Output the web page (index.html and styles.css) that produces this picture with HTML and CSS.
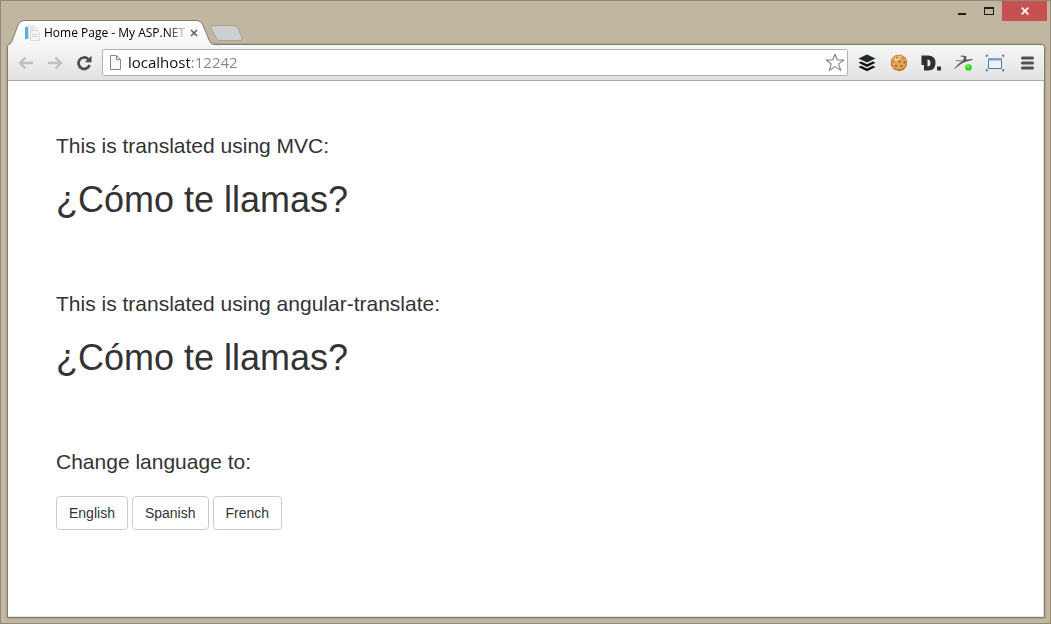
FILE: index.html
```html
<!DOCTYPE html>
<html lang="en">
<head>
<meta charset="utf-8">
<title>Home Page - My ASP.NET Application</title>
<link rel="stylesheet" href="styles.css">
</head>
<body>
<div class="window">
  <header class="titlebar">
    <div class="tab">
      <svg class="tab-shape" width="206" height="26" viewBox="0 0 206 26" aria-hidden="true">
        <defs><linearGradient id="tabfill" x1="0" y1="0" x2="0" y2="1"><stop offset="0" stop-color="#fff"/><stop offset="1" stop-color="#f6f6f6"/></linearGradient></defs>
        <path d="M0 26V25Q3 24 4 21L10 5Q12 .5 16 .5H189Q193 .5 195 5L201 20Q203 24.500 206 24.500V26Z" fill="url(#tabfill)"/>
        <path d="M0 25Q3 24 4 21L10 5Q12 .5 16 .5H189Q193 .5 195 5L201 20Q203 24.500 206 24.500" fill="none" stroke="#847a68"/>
      </svg>
      <svg class="favicon" width="16" height="16" viewBox="0 0 16 16" aria-hidden="true">
        <path d="M1 1.500H11V14.500H1Z" fill="#e6eef4"/>
        <path d="M1 2H4V14H1Z" fill="#62a9dc"/><path d="M4.500 .5H10.500L13 3V13H4.500Z" fill="#f1f3f5" stroke="#dde2e5"/>
        <path d="M6 3H10M6 5H9" stroke="#c5d2dc"/><path d="M6.500 5.500H12.500L15.500 8V15.500H6.500Z" fill="#f5f6f7" stroke="#d7dbdf"/>
        <path d="M8 9.500H13M8 11.500H14" stroke="#ccd4da"/>
      </svg>
      <span class="tab-title">Home Page - My ASP.NET</span>
      <button class="tab-close" aria-label="Close tab"><svg width="8" height="8" viewBox="0 0 8 8"><path d="M1 1L7 7M7 1L1 7" stroke="#5c5c5c" stroke-width="1.500"/></svg></button>
    </div>
    <button class="new-tab" aria-label="New tab"><svg width="33" height="17" viewBox="0 0 33 17"><path d="M3.500 .5H24Q27 .5 28 3L32 13Q33 15.500 30 15.500H10Q7 15.500 6 13L1 3Q0 .5 3.500 .5Z" fill="#cdd0d2" stroke="#aaa18e"/></svg></button>
    <div class="controls">
      <button class="control" aria-label="Minimize"><svg width="8" height="10" viewBox="0 0 8 10"><path d="M0 7H8V9H0Z" fill="#1c1c1c"/></svg></button>
      <button class="control" aria-label="Maximize"><svg width="10" height="8" viewBox="0 0 10 8"><path d="M0 0H10V8H0ZM1 2V7H9V2Z" fill="#1c1c1c" fill-rule="evenodd"/></svg></button>
      <button class="control control-close" aria-label="Close window"><svg width="8" height="8" viewBox="0 0 8 8"><path d="M.7 .7L7.300 7.300M7.300 .7L.7 7.300" stroke="#fff" stroke-width="1.700"/></svg></button>
    </div>
  </header>
  <div class="frame">
    <nav class="toolbar" aria-label="Browser">
      <button class="nav" aria-label="Back"><svg width="16" height="14" viewBox="0 0 16 14"><path d="M15 7H2M7.500 1.500L2 7L7.500 12.500" fill="none" stroke="#c0c0c0" stroke-width="2.400"/></svg></button>
      <button class="nav" aria-label="Forward"><svg width="16" height="14" viewBox="0 0 16 14"><path d="M1 7H14M8.500 1.500L14 7L8.500 12.500" fill="none" stroke="#c0c0c0" stroke-width="2.400"/></svg></button>
      <button class="nav" aria-label="Reload"><svg width="16" height="16" viewBox="0 0 16 16"><path d="M12.300 4.200A5.700 5.700 0 1 0 13.600 10" fill="none" stroke="#4c4c4c" stroke-width="2.700"/><path d="M15.500 .8V7.300H8.800Z" fill="#4c4c4c"/></svg></button>
      <div class="address">
        <svg width="13" height="16" viewBox="0 0 13 16" aria-hidden="true"><path d="M1.500 .5H7.500L11.500 4.500V14.500H1.500ZM7.500 .5V4.500H11.500" fill="#fafafa" stroke="#888"/></svg>
        <input class="url" type="text" aria-label="Address" value="localhost:12242" spellcheck="false">
        <button class="star" aria-label="Bookmark this page"><svg width="20" height="19" viewBox="0 0 20 19"><path d="M10 1.200L12.300 7H18.800L13.700 10.900L15.700 17.400L10 13.600L4.300 17.400L6.300 10.900L1.200 7H7.700Z" fill="#fff" stroke="#808080" stroke-width="1.100" stroke-linejoin="round"/></svg></button>
      </div>
      <div class="extensions">
        <button class="ext" aria-label="Buffer"><svg width="18" height="18" viewBox="0 0 18 18"><path d="M9 .5L17.500 4.500L9 8.500L.5 4.500Z" fill="#222b30"/><path d="M.5 8.700L3 7.500L9 10.300L15 7.500L17.500 8.700L9 12.900ZM.5 13L3 11.800L9 14.600L15 11.800L17.500 13L9 17.300Z" fill="#0c1115"/></svg></button>
        <button class="ext" aria-label="Cookies"><svg width="18" height="18" viewBox="0 0 18 18"><path d="M6 1L11 .8L15.500 3.500L17 7L16.800 12L13.500 16L9 17.200L4 15.500L1 11.500L.8 7L3 3Z" fill="#bd7223"/><path d="M6 1.500L11 1.300L15 3.800L16.200 8L15.500 12L12 15L7 15.500L3 13L1.500 9L3 4Z" fill="#e3a454"/><path d="M5 3L10 2L13 4L10 5L6 8L3 8Z" fill="#f2c382"/><g fill="#8a5426"><circle cx="7" cy="3.500" r=".8"/><circle cx="12.500" cy="4" r=".8"/><circle cx="4" cy="7.500" r=".8"/><circle cx="9.500" cy="7.500" r="1"/><circle cx="14.500" cy="8.500" r=".9"/><circle cx="6" cy="12" r="1"/><circle cx="11.500" cy="12" r="1"/></g></svg></button>
        <button class="ext" aria-label="Disconnect"><svg width="20" height="16" viewBox="0 0 20 16"><path d="M.5 .5H7Q14.500 .5 14.500 8T7 15.500H3V10H.5ZM6.500 4.500V11.500Q9.500 11.500 9.500 8T6.500 4.500Z" fill="#303030" fill-rule="evenodd"/><path d="M16 11.500H20V15.500H16Z" fill="#303030"/></svg></button>
        <button class="ext" aria-label="Live reload"><svg width="20" height="18" viewBox="0 0 20 18"><path d="M1 14.500L6 9.500L10 6.500L11 3L7.500 2.500V1.500L13.500 2L13 5.500L19.500 5V6L12 8L8 10L5.500 12L1 15Z" fill="#5b5b5b"/><path d="M3 6.500L10 7" stroke="#777"/><circle cx="15.500" cy="13.500" r="3.300" fill="#27d817"/><circle cx="15" cy="12.500" r="1.300" fill="#83fb68"/></svg></button>
        <button class="ext" aria-label="Resize window"><svg width="20" height="18" viewBox="0 0 20 18"><path d="M1.500 3V1.500H3M17 1.500H18.500V3M1.500 15V16.500H3M17 16.500H18.500V15" fill="none" stroke="#467eb5" stroke-width="1.300"/><path d="M3.500 4.500H16.500V14.500H3.500Z" fill="#f0f0f0" stroke="#4b7ba8"/><path d="M3 4H17V6.500H3Z" fill="#779fcd"/></svg></button>
        <button class="ext" aria-label="Menu"><svg width="13" height="14" viewBox="0 0 13 14"><path d="M1.500 2H11.500M1.500 7H11.500M1.500 12H11.500" stroke="#505050" stroke-width="3" stroke-linecap="round"/></svg></button>
      </div>
    </nav>
    <main class="page">
      <section class="block">
        <p class="lead">This is translated using MVC:</p>
        <h1 class="phrase">¿Cómo te llamas?</h1>
      </section>
      <section class="block">
        <p class="lead">This is translated using angular-translate:</p>
        <h1 class="phrase">¿Cómo te llamas?</h1>
      </section>
      <section class="block">
        <p class="lead">Change language to:</p>
        <div class="languages">
          <button class="btn">English</button>
          <button class="btn">Spanish</button>
          <button class="btn">French</button>
        </div>
      </section>
    </main>
  </div>
</div>
</body>
</html>
```
FILE: styles.css
```css
* { box-sizing: border-box; }
body { margin: 0; }
button { margin: 0; padding: 0; border: 0; background: none; font: inherit; }
svg { display: block; flex: none; }

.window {
  display: flex;
  flex-direction: column;
  min-height: 100vh;
  padding: 0 5px 5px 6px;
  border: 1px solid #91897a;
  background: #c1b69f;
  font-family: "Open Sans", "Noto Sans", sans-serif;
}
.titlebar { display: flex; align-items: flex-end; height: 43px; }
.tab {
  position: relative;
  z-index: 1;
  display: flex;
  align-items: center;
  width: 206px;
  height: 26px;
  margin: 0 0 -2px 1px;
  padding: 0 15px 0 16px;
}
.tab-shape { position: absolute; inset: 0; }
.favicon, .tab-title, .tab-close { position: relative; }
.tab-title {
  flex: 1;
  margin: 0 1px 0 4px;
  overflow: hidden;
  color: #000;
  font-size: 12px;
  line-height: 24px;
  white-space: nowrap;
  mask-image: linear-gradient(to right, #000 86%, transparent);
}
.tab-close { padding: 1px; }
.new-tab { margin: 0 0 2px -4px; }

.controls { display: flex; align-self: flex-start; margin: 0 -2px 0 auto; }
.control {
  display: flex;
  align-items: center;
  justify-content: center;
  width: 27px;
  height: 20px;
}
.control-close { width: 45px; background: #c75050; }

.frame {
  display: flex;
  flex: 1;
  flex-direction: column;
  border: 1px solid #81796b;
  border-radius: 4px 4px 0 0;
  background: #fff;
  box-shadow: 0 0 2px #81796b;
}
.toolbar {
  display: flex;
  align-items: center;
  height: 36px;
  padding: 0 1px 0 3px;
  border-bottom: 1px solid #a9a9a9;
  border-radius: 3px 3px 0 0;
  background: linear-gradient(#f7f7f7, #e2e2e2);
}
.nav {
  display: flex;
  align-items: center;
  justify-content: center;
  width: 29px;
  height: 28px;
}
.address {
  display: flex;
  flex: 1;
  align-items: center;
  min-width: 0;
  height: 27px;
  margin: 0 3px 0 4px;
  padding: 0 2px 0 6px;
  border: 1px solid #b2b2b2;
  border-radius: 2px;
  background: #fff;
}
.url {
  flex: 1;
  min-width: 0;
  height: 24px;
  margin-left: 6px;
  padding: 0 0 2px;
  border: 0;
  outline: 0;
  background: linear-gradient(to right, #111 62px, #858585 62px);
  background-clip: text;
  color: transparent;
  font-family: "Open Sans", "Noto Sans", sans-serif;
  font-size: 15px;
}
.extensions { display: flex; }
.ext {
  display: flex;
  align-items: center;
  justify-content: center;
  width: 32px;
  height: 28px;
}

.page {
  flex: 1;
  padding: 50px 48px;
  border: solid #e4e4e4;
  border-width: 0 1px 1px 0;
  color: #333;
  font-family: "Liberation Sans", Arial, sans-serif;
}
.block + .block { margin-top: 69px; }
.lead { margin: 0 0 20px; font-size: 21px; line-height: 29px; }
.phrase { margin: 0; font-size: 36px; font-weight: 400; line-height: 40px; }
.languages { display: flex; gap: 4px; }
.btn {
  padding: 6px 12px;
  border: 1px solid #ccc;
  border-radius: 4px;
  background: #fff;
  color: #333;
  font-size: 14px;
  line-height: 20px;
}
```
